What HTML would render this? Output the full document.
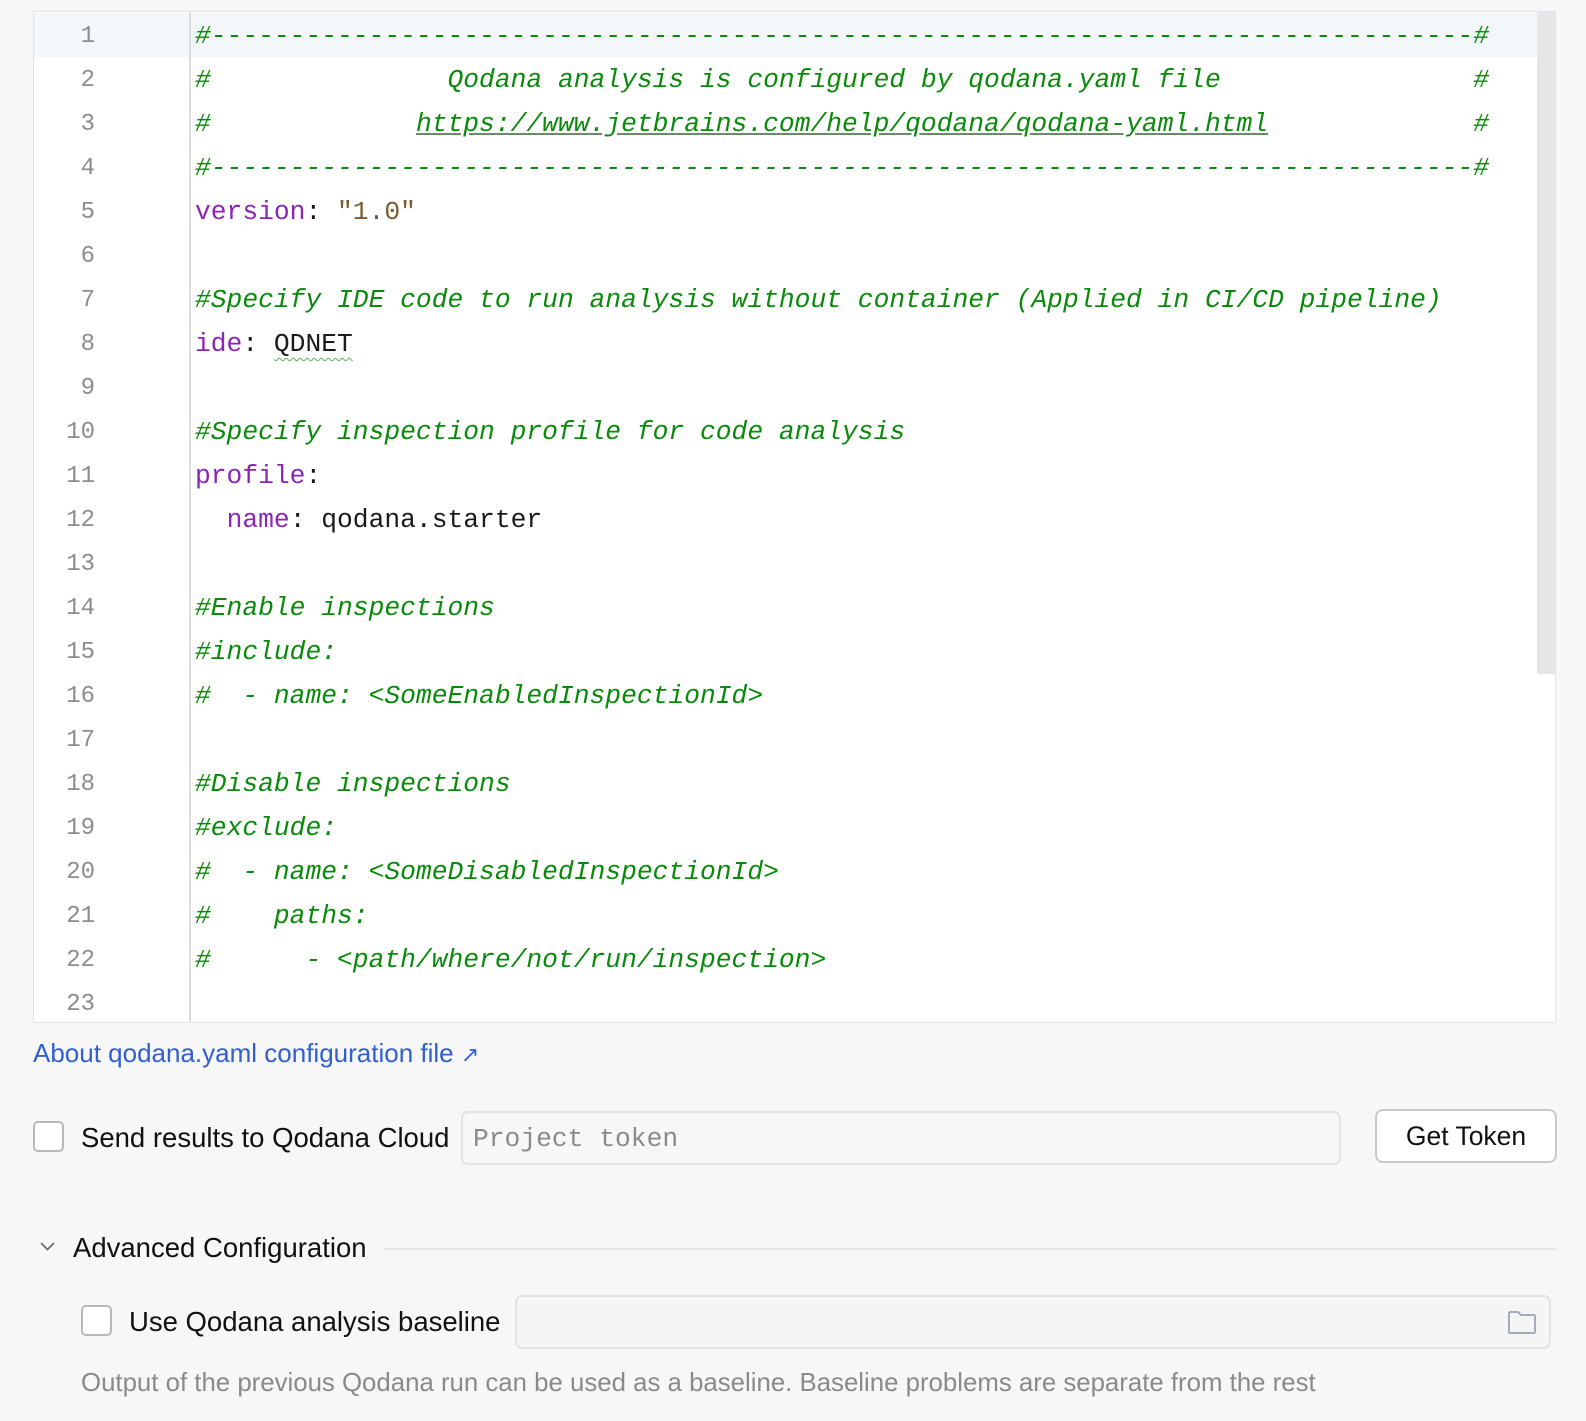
<!DOCTYPE html>
<html><head><meta charset="utf-8"><style>
*{margin:0;padding:0;box-sizing:border-box}
body{width:1586px;height:1421px;background:#f7f7f7;position:relative;overflow:hidden;font-family:"Liberation Sans",sans-serif}
.ed{position:absolute;left:33px;top:11px;width:1523px;height:1012px;background:#fff;border:1px solid #e4e4e4;overflow:hidden}
.hl{position:absolute;left:0;top:1px;width:1503px;height:44px;background:#f4f7f9}
.gut{position:absolute;left:155px;top:0;width:2px;height:100%;background:#dcdcdc}
.sb{position:absolute;left:1503px;top:0;width:20px;height:662px;background:#e6e6e9}
.nums{position:absolute;left:0;top:3px;width:61px;text-align:right;font:24px/44px "Liberation Mono",monospace;color:#8c8c8c}
.code{position:absolute;left:161px;top:2px;font:26.3px/44px "Liberation Mono",monospace;color:#1a1a1a;white-space:pre}
.c{color:#0a8a0a;font-style:italic}
.k{color:#8a25b5}
.s{color:#7a5a30}
.u{text-decoration:underline;text-decoration-color:#6a8a6a}
.w{text-decoration:underline wavy #5cae5c;text-decoration-thickness:1px;text-underline-offset:6px}
.t{position:absolute;white-space:nowrap}
.cb{position:absolute;width:31px;height:31px;border:2px solid #b8b8b8;border-radius:5px;background:#fff}
</style></head><body>
<div class="ed">
<div class="hl"></div>
<div class="gut"></div>
<div class="sb"></div>
<div class="nums">1<br>2<br>3<br>4<br>5<br>6<br>7<br>8<br>9<br>10<br>11<br>12<br>13<br>14<br>15<br>16<br>17<br>18<br>19<br>20<br>21<br>22<br>23</div>
<div class="code"><span class="c">#--------------------------------------------------------------------------------#</span>
<span class="c">#               Qodana analysis is configured by qodana.yaml file                #</span>
<span class="c">#             <span class="u">https://www.jetbrains.com/help/qodana/qodana-yaml.html</span>             #</span>
<span class="c">#--------------------------------------------------------------------------------#</span>
<span class="k">version</span>: <span class="s">"1.0"</span>

<span class="c">#Specify IDE code to run analysis without container (Applied in CI/CD pipeline)</span>
<span class="k">ide</span>: <span class="w">QDNET</span>

<span class="c">#Specify inspection profile for code analysis</span>
<span class="k">profile</span>:
  <span class="k">name</span>: qodana.starter

<span class="c">#Enable inspections</span>
<span class="c">#include:</span>
<span class="c">#  - name: &lt;SomeEnabledInspectionId&gt;</span>

<span class="c">#Disable inspections</span>
<span class="c">#exclude:</span>
<span class="c">#  - name: &lt;SomeDisabledInspectionId&gt;</span>
<span class="c">#    paths:</span>
<span class="c">#      - &lt;path/where/not/run/inspection&gt;</span>
</div>
</div>

<div class="t" style="left:33px;top:1038px;font-size:26px;color:#315fcf">About qodana.yaml configuration file <span style="font-size:22px">↗</span></div>

<div class="cb" style="left:33px;top:1121px"></div>
<div class="t" style="left:81px;top:1122px;font-size:27.5px;color:#111">Send results to Qodana Cloud</div>
<div style="position:absolute;left:461px;top:1111px;width:880px;height:54px;border:2px solid #e3e3e3;border-radius:7px;background:#f7f7f7"></div>
<div class="t" style="left:473px;top:1124px;font:26.3px 'Liberation Mono',monospace;color:#8a8a8a">Project token</div>
<div style="position:absolute;left:1375px;top:1109px;width:182px;height:54px;border:2px solid #c9c9c9;border-radius:8px;background:#fff;text-align:center;font-size:26.5px;line-height:51px;color:#111">Get Token</div>

<svg style="position:absolute;left:39px;top:1240px" width="17" height="12" viewBox="0 0 17 12"><path d="M2 3l6.5 6.5L15 3" fill="none" stroke="#6e6e6e" stroke-width="1.8"/></svg>
<div class="t" style="left:73px;top:1232px;font-size:27.5px;color:#111">Advanced Configuration</div>
<div style="position:absolute;left:384px;top:1248px;width:1173px;height:2px;background:#e8e8e8"></div>

<div class="cb" style="left:81px;top:1305px"></div>
<div class="t" style="left:129px;top:1306px;font-size:27.5px;color:#111">Use Qodana analysis baseline</div>
<div style="position:absolute;left:515px;top:1295px;width:1036px;height:54px;border:2px solid #e3e3e3;border-radius:7px;background:#f5f5f5"></div>
<svg style="position:absolute;left:1507px;top:1309px" width="30" height="26" viewBox="0 0 30 26"><path d="M2 4.5Q2 3 3.5 3H11l3 3h12.5Q28 6 28 7.5v15Q28 24 26.5 24h-23Q2 24 2 22.5z" fill="none" stroke="#a6aab8" stroke-width="2"/></svg>
<div class="t" style="left:81px;top:1369px;font-size:25.8px;color:#8a8a8a">Output of the previous Qodana run can be used as a baseline. Baseline problems are separate from the rest</div>
</body></html>
